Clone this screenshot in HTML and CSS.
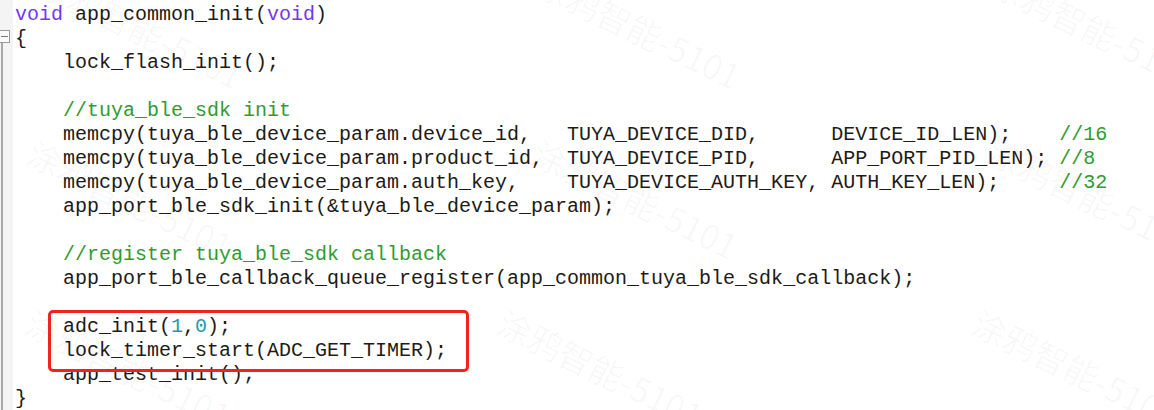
FILE: index.html
```html
<!DOCTYPE html>
<html lang="zh">
<head>
<meta charset="utf-8">
<title>app_common_init</title>
<link rel="stylesheet" href="styles.css">
</head>
<body>
<div class="page">
<div class="editor">
  <div class="gutter">
    <div class="gutter-top"></div>
    <div class="fold-box"><span class="fold-minus"></span></div>
    <div class="fold-line"></div>
  </div>
  <div class="code">
<div class="ln"><span class="kw">void</span> app_common_init(<span class="kw">void</span>)</div>
<div class="ln">{</div>
<div class="ln">    lock_flash_init();</div>
<div class="ln"> </div>
<div class="ln">    <span class="cm">//tuya_ble_sdk init</span></div>
<div class="ln">    memcpy(tuya_ble_device_param.device_id,   TUYA_DEVICE_DID,      DEVICE_ID_LEN);    <span class="cm">//16</span></div>
<div class="ln">    memcpy(tuya_ble_device_param.product_id,  TUYA_DEVICE_PID,      APP_PORT_PID_LEN); <span class="cm">//8</span></div>
<div class="ln">    memcpy(tuya_ble_device_param.auth_key,    TUYA_DEVICE_AUTH_KEY, AUTH_KEY_LEN);     <span class="cm">//32</span></div>
<div class="ln">    app_port_ble_sdk_init(&amp;tuya_ble_device_param);</div>
<div class="ln"> </div>
<div class="ln">    <span class="cm">//register tuya_ble_sdk callback</span></div>
<div class="ln">    app_port_ble_callback_queue_register(app_common_tuya_ble_sdk_callback);</div>
<div class="ln"> </div>
<div class="ln">    adc_init(<span class="num">1</span>,<span class="num">0</span>);</div>
<div class="ln">    lock_timer_start(ADC_GET_TIMER);</div>
<div class="ln">    app_test_init();</div>
<div class="ln">}</div>
  </div>
</div>
<div class="highlight-box"></div>
<div class="wm wm-a1">涂鸦智能-5101</div>
<div class="wm wm-a2">涂鸦智能-5101</div>
<div class="wm wm-a3">涂鸦智能-5101</div>
<div class="wm wm-b1">涂鸦智能-5101</div>
<div class="wm wm-b2">涂鸦智能-5101</div>
<div class="wm wm-b3">涂鸦智能-5101</div>
<div class="wm wm-c1">涂鸦智能-5101</div>
<div class="wm wm-c2">涂鸦智能-5101</div>
<div class="wm wm-c3">涂鸦智能-5101</div>
</div>
</body>
</html>
```
FILE: styles.css
```css
html, body {
  margin: 0;
  padding: 0;
  background: #ffffff;
  overflow: hidden;
}
.page {
  width: 1154px;
  height: 410px;
  overflow: hidden;
  position: relative;
}
.editor {
  display: flex;
  height: 410px;
  overflow: hidden;
}
.gutter {
  width: 13px;
  flex: 0 0 13px;
  background: #f4f4f4;
  display: flex;
  flex-direction: column;
}
.gutter-top {
  height: 30px;
  flex: 0 0 30px;
}
.fold-box {
  width: 10px;
  height: 13px;
  flex: 0 0 13px;
  box-sizing: border-box;
  border: 1px solid #9a9a9a;
  border-left: none;
  background: #fbfbfb;
  display: flex;
  align-items: center;
  justify-content: center;
}
.fold-minus {
  width: 7px;
  height: 1px;
  background: #7a7a7a;
}
.fold-line {
  flex: 1;
  width: 2px;
  margin-left: 1px;
  background: #a8a8a8;
}
.code {
  height: 407px;
  overflow: hidden;
  padding: 3px 0 0 2px;
  font-family: "Liberation Mono", "Courier New", monospace;
  font-size: 20px;
  line-height: 24px;
  color: #1e1a16;
}
.ln {
  white-space: pre;
  height: 24px;
}
.kw {
  color: #7338f2;
}
.cm {
  color: #2f9c2f;
}
.num {
  color: #2399a3;
}
.highlight-box {
  position: absolute;
  left: 48px;
  top: 310px;
  width: 421px;
  height: 62px;
  box-sizing: border-box;
  border: 3px solid #f2231f;
  border-radius: 5px;
}
.wm {
  position: absolute;
  font-family: "Noto Sans CJK SC", "Noto Sans", sans-serif;
  font-size: 34px;
  line-height: 40px;
  color: rgba(0, 0, 0, 0.03);
  white-space: nowrap;
  transform: rotate(26deg);
  transform-origin: 0 50%;
  pointer-events: none;
}
.wm-a1 { left: 40px; top: -40px; }
.wm-a2 { left: 538px; top: -40px; }
.wm-a3 { left: 993px; top: -40px; }
.wm-b1 { left: 30px; top: 130px; }
.wm-b2 { left: 535px; top: 130px; }
.wm-b3 { left: 990px; top: 128px; }
.wm-c1 { left: 28px; top: 300px; }
.wm-c2 { left: 500px; top: 300px; }
.wm-c3 { left: 975px; top: 300px; }
```
